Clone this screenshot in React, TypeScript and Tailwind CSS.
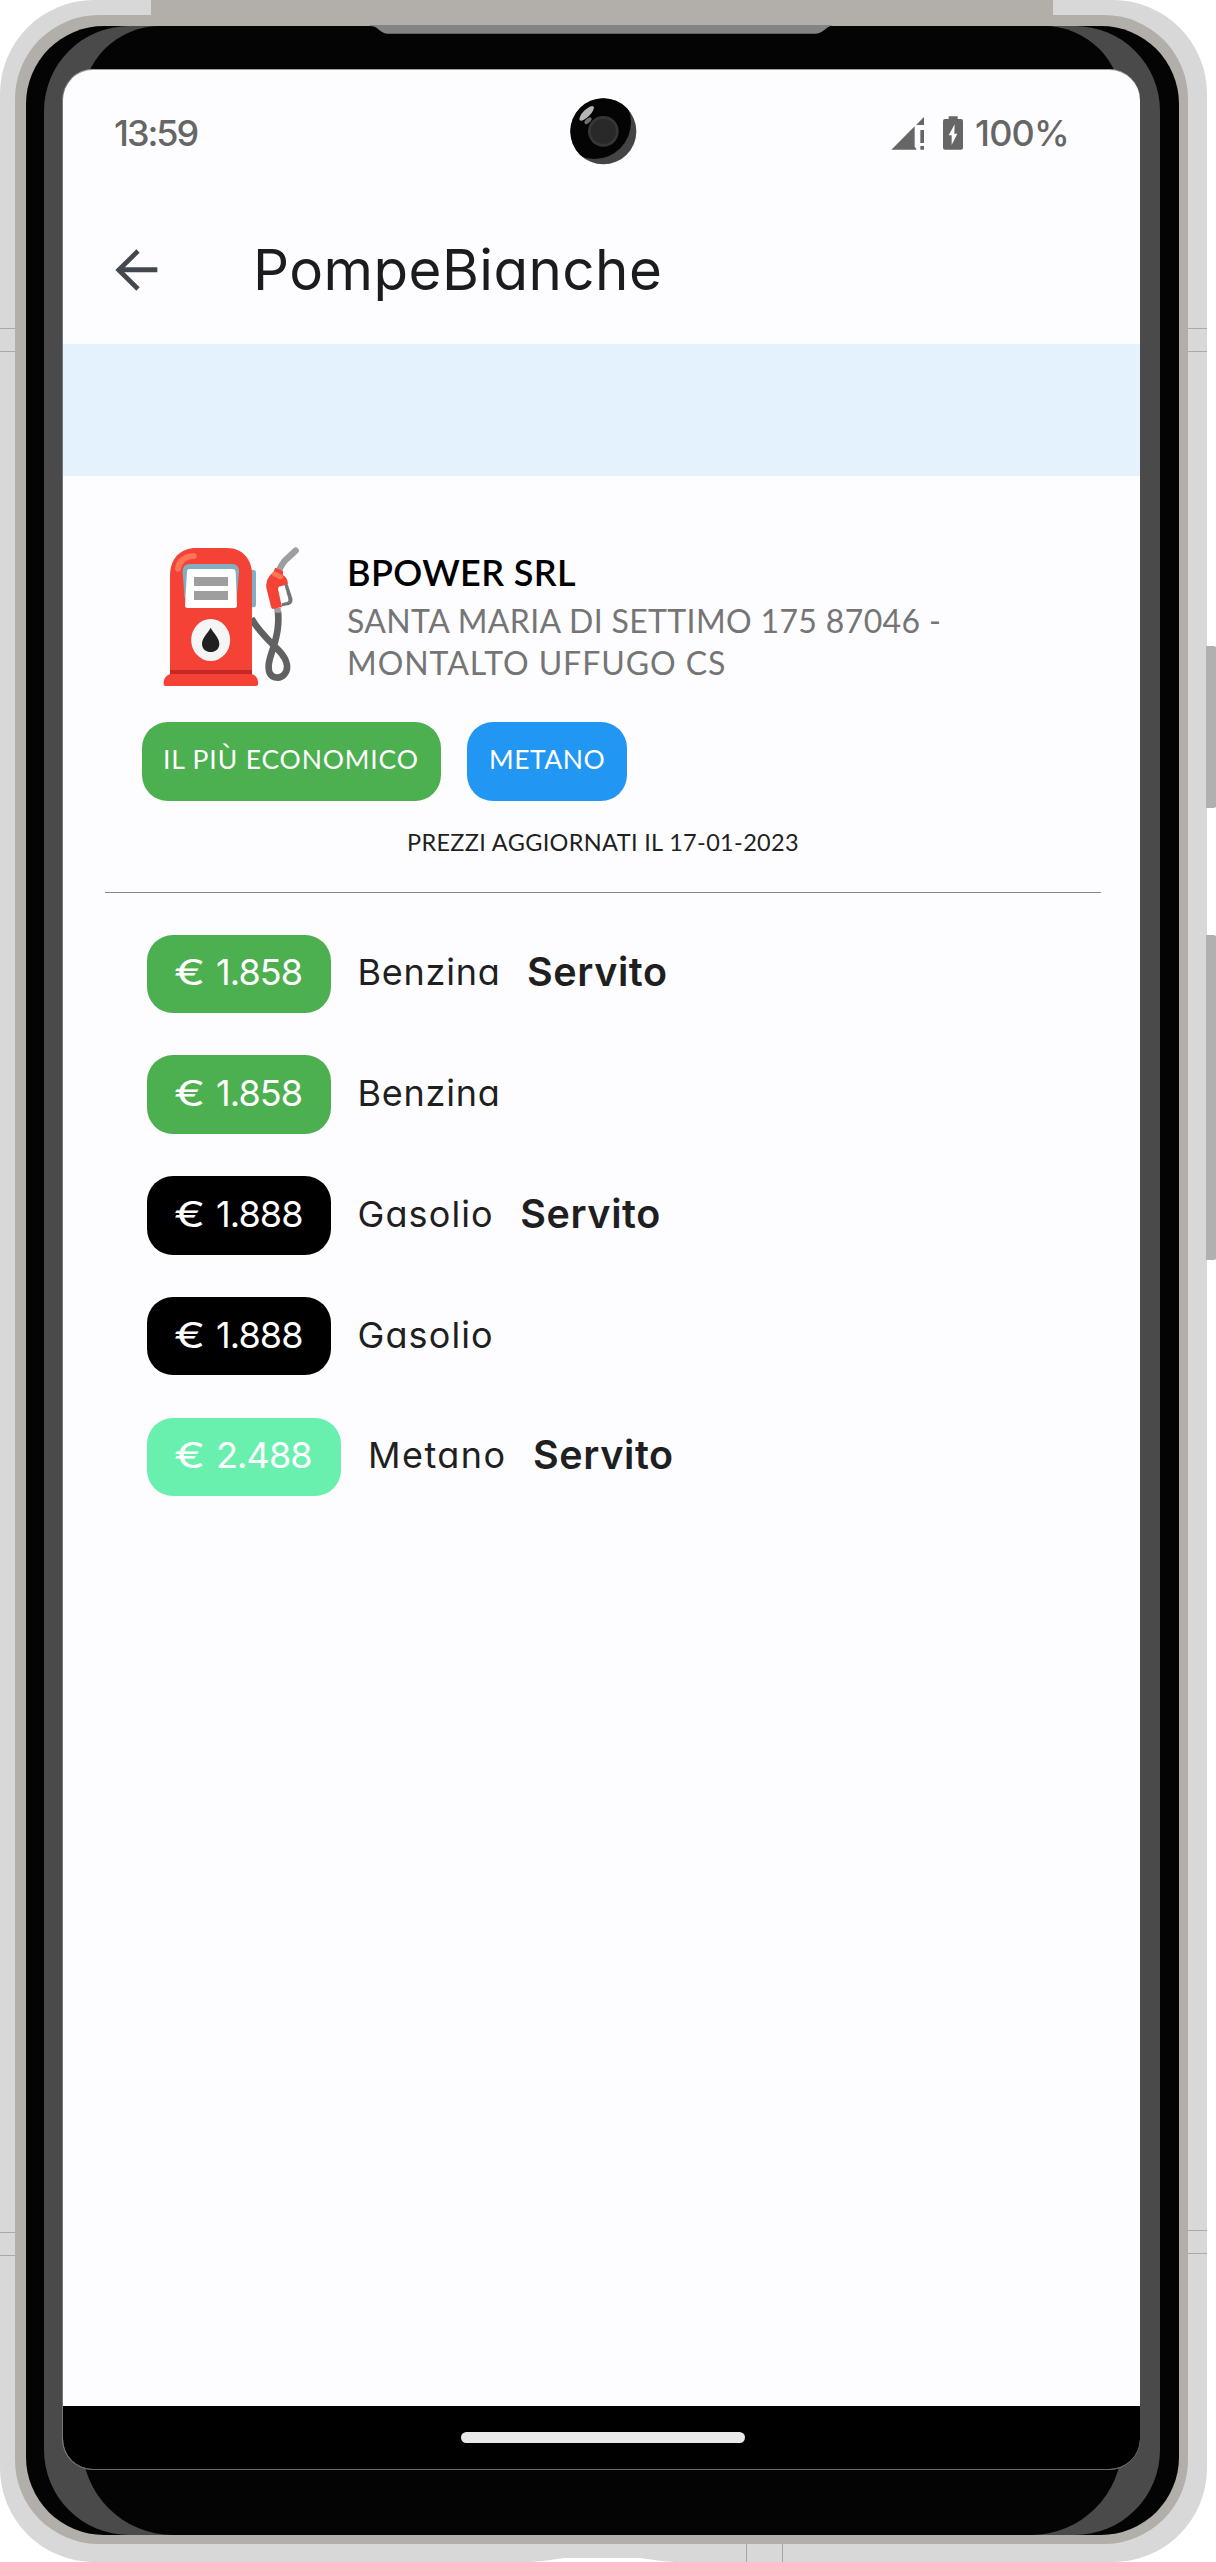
type FuelRow = {
  amount: string;
  fuel: string;
  served: boolean;
  pill: string;
  tracking: string;
};

const rows: FuelRow[] = [
  { amount: '1.858', fuel: 'Benzina', served: true, pill: 'w-[183.5px] bg-[#4caf50]', tracking: 'tracking-[0.75px]' },
  { amount: '1.858', fuel: 'Benzina', served: false, pill: 'w-[183.5px] bg-[#4caf50]', tracking: 'tracking-[0.75px]' },
  { amount: '1.888', fuel: 'Gasolio', served: true, pill: 'w-[183.5px] bg-black', tracking: 'tracking-[1.1px]' },
  { amount: '1.888', fuel: 'Gasolio', served: false, pill: 'w-[183.5px] bg-black', tracking: 'tracking-[1.1px]' },
  { amount: '2.488', fuel: 'Metano', served: true, pill: 'w-[194px] bg-[#69f0ae]', tracking: 'tracking-[1.45px]' },
];

function SignalIcon() {
  return (
    <svg className="h-[35px] w-[35px]" viewBox="0 0 105 105" fill="#666">
      <path d="M1 101 L71 31 V92 L76 98 V101 Z" />
      <path d="M76 26 L99 3 V27 H76 Z" />
      <path d="M88 42h11v39H88zM88 90h11v11H88z" />
    </svg>
  );
}

function BatteryIcon() {
  return (
    <svg className="h-[34px] w-[20px]" viewBox="0 0 60 102">
      <path
        d="M17 1h27v8h10q6 0 6 6v80q0 6-6 6H6q-6 0-6-6V15q0-6 6-6h11z"
        fill="#666"
      />
      <path d="M35 25 17 58h9v29l17-34h-9z" fill="#fff" />
    </svg>
  );
}

function BackIcon() {
  return (
    <svg className="h-[42px] w-[43px]" viewBox="0 0 129 126" fill="none" stroke="#43474e">
      <path d="M127 62H14" strokeWidth="15" />
      <path d="M69 6 11 63l58 57" strokeWidth="14" />
    </svg>
  );
}

function Camera() {
  return (
    <svg className="absolute left-[507px] top-[28px] h-[67px] w-[67px]" viewBox="0 0 201 201">
      <defs>
        <clipPath id="lens">
          <circle cx="100" cy="100" r="99" />
        </clipPath>
      </defs>
      <circle cx="100" cy="100" r="99" fill="#444" />
      <circle cx="73" cy="73" r="110" fill="#040404" clipPath="url(#lens)" />
      <circle cx="100" cy="100" r="46" fill="#373737" />
      <circle cx="100" cy="100" r="38" fill="#292929" />
      <ellipse cx="50" cy="46" rx="29" ry="10.5" fill="#b5b5b5" transform="rotate(-45 50 46)" />
      <ellipse cx="54" cy="68" rx="13" ry="6.5" fill="#707070" transform="rotate(-43 54 68)" />
    </svg>
  );
}

function FuelPump() {
  return (
    <svg className="h-[160px] w-[160px] shrink-0" viewBox="0 0 480 480">
      {/* hose */}
      <path
        d="M304 250C328 292 362 322 386 346C412 374 418 400 403 418C390 433 367 430 359 414C350 392 362 362 372 332C380 302 388 272 384 230"
        fill="none"
        stroke="#616161"
        strokeWidth="20"
      />
      <rect x="296" y="105" width="22" height="112" rx="7" fill="#82aec0" />
      {/* cabinet */}
      <path d="M60 425V122C60 70 92 39 138 39H232C276 39 306 72 306 118V425Z" fill="#f44336" />
      <path d="M60 405h246v12H60z" fill="#c62828" />
      <path d="M60 417H306Q324 424 324 442V448Q324 453 318 453H47Q41 453 41 448V442Q42 424 60 417Z" fill="#f44336" />
      <path d="M84 101C86 80 103 64 131 63" fill="none" stroke="#ff7555" strokeWidth="18" strokeLinecap="round" />
      {/* display */}
      <path d="M104 190 98 112Q97 87 120 87H246Q268 87 267 112L260 190Z" fill="#82aec0" />
      <path d="M118 102H249Q256 102 257 110L261 211Q261 219 253 219H112Q105 219 105 211L111 110Q111 102 118 102Z" fill="#fff" />
      <path d="M132 126h102v27H132zM132 168h102v27H132z" fill="#9e9e9e" />
      <ellipse cx="182" cy="315" rx="58.5" ry="63" fill="#f5f5f5" />
      <path d="M182 278C190 294 208 308 208 326C208 342 196 351 182 351C168 351 156 342 156 326C156 308 174 294 182 278Z" fill="#212121" />
      {/* nozzle */}
      <path d="M384 112C396 88 399 79 412 70L437 47" fill="none" stroke="#9e9e9e" strokeWidth="19" strokeLinecap="round" strokeLinejoin="round" />
      <path d="M372 219h20l1 14h-19z" fill="#9e9e9e" />
      <path
        d="M376 98 399 108V120Q414 130 414 148L386 155 384 163 396 216 368 222Q364 220 363 215L349 158Q347 138 359 122L370 111Z"
        fill="#f44336"
      />
      <path d="M374 117 392 126" stroke="#ff7555" strokeWidth="15" strokeLinecap="round" />
      <path d="M386 160 407 151 415 192Q416 200 408 202L394 206Z" fill="#fff" />
      <path d="M403 148 413 148 427 190Q430 206 417 210L396 214 395 205 411 201Q417 199 415 191Z" fill="#757575" />
    </svg>
  );
}

function Screen() {
  return (
    <div className="relative flex h-[2401px] w-[1078px] flex-col overflow-hidden rounded-[31px] border-y border-l border-t-[#a0a0a0] border-b-[#6a6a6a] border-l-[#777] bg-[#fdfdff]">
      <Camera />
      <div className="flex h-[126px] shrink-0 items-center justify-between pl-[51px] pr-[71px] text-[36px] font-medium leading-none text-[#666]">
        <span className="tracking-[-2.05px]">13:59</span>
        <div className="flex items-center">
          <SignalIcon />
          <div className="ml-[17px] flex items-center">
            <BatteryIcon />
          </div>
          <span className="ml-[12px] tracking-[-0.8px]">100%</span>
        </div>
      </div>

      <header className="flex h-[148px] shrink-0 items-center pl-[52px]">
        <BackIcon />
        <h1 className="ml-[95px] text-[56.5px] leading-none tracking-[0.45px] text-[#1a1c1e]">
          PompeBianche
        </h1>
      </header>

      <div className="h-[132px] shrink-0 bg-[#e3f2fd]" />

      <main className="flex grow flex-col pt-[59px]">
        <section className="flex pl-[87px]">
          <FuelPump />
          <div className="ml-[37px] mt-[16px] font-['Lato',sans-serif]">
            <h2 className="text-[36px] font-semibold leading-[42px] tracking-[0.38px] text-black">
              BPOWER SRL
            </h2>
            <p className="mt-[7px] whitespace-nowrap text-[32px] leading-[42px] text-[#757575]">
              <span className="tracking-[0.36px]">SANTA MARIA DI SETTIMO 175 87046 -</span>
              <br />
              <span className="tracking-[0.94px]">MONTALTO UFFUGO CS</span>
            </p>
          </div>
        </section>

        <div className="mt-[27px] flex gap-[26px] pl-[79px] font-['Lato',sans-serif] text-[26.5px] leading-none text-white">
          <span className="flex h-[78.5px] w-[299px] items-center rounded-[26px] bg-[#4caf50] pb-[4px] pl-[21px] tracking-[0.86px]">
            IL PIÙ ECONOMICO
          </span>
          <span className="flex h-[78.5px] w-[160px] items-center rounded-[26px] bg-[#2196f3] pb-[4px] pl-[22px] tracking-[0.52px]">
            METANO
          </span>
        </div>

        <p className="mt-[25.5px] pl-[3px] text-center font-['Lato',sans-serif] text-[23.5px] leading-[32px] tracking-[0.34px] text-[#1f1f21]">
          PREZZI AGGIORNATI IL 17-01-2023
        </p>
        <div className="ml-[42px] mr-[39px] mt-[33.5px] h-px shrink-0 bg-[#84878c]" />

        <ul className="mt-[42px] flex flex-col gap-[42.3px] pl-[84px]">
          {rows.map((row, i) => (
            <li key={i} className="flex h-[78.5px] items-center whitespace-nowrap text-[36px] leading-none text-[#1f1f21]">
              <span className={`flex h-full items-center rounded-[26px] pb-[3px] pl-[27px] text-white ${row.pill}`}>
                <span className="w-[42px] origin-left scale-x-[1.3]">€ </span>
                <span className="tracking-[-0.9px]">{row.amount}</span>
              </span>
              <span className={`ml-[27px] pb-[3px] ${row.tracking}`}>{row.fuel}</span>
              {row.served && (
                <span className="ml-[26.5px] pb-[2px] text-[39.5px] font-semibold tracking-[0.6px]">
                  Servito
                </span>
              )}
            </li>
          ))}
        </ul>
      </main>

      <nav className="flex h-[63px] shrink-0 items-center justify-center bg-black pl-[2px]">
        <div className="h-[11px] w-[284px] rounded-full bg-[#eaeaea]" />
      </nav>
    </div>
  );
}

/* Seams, buttons and port cut-out that sit on top of the device body. */
function BodyDetails() {
  return (
    <>
      <div className="absolute left-[151px] top-0 h-[26px] w-[902px] bg-[#b2afaa]" />
      <svg className="absolute left-[370px] top-[25px] h-[9px] w-[464px]" viewBox="0 0 464 9">
        <path d="M0 1Q5 1 8 4Q13 8.7 18 8.7H445Q450 8.7 455 4.500Q460 0 464 0H0Z" fill="#848484" />
      </svg>
      <div className="absolute left-0 top-[328px] h-[24px] w-[16px] border-y border-[#aaa]" />
      <div className="absolute left-[1187px] top-[328px] h-[24px] w-[20px] border-y border-[#aaa]" />
      <div className="absolute left-0 top-[2232px] h-[24px] w-[16px] border-y border-[#aaa]" />
      <div className="absolute left-[1187px] top-[2230px] h-[24px] w-[20px] border-y border-[#aaa]" />
      <div className="absolute left-[746px] top-[2543px] h-[19px] w-[37px] border-x border-[#a5a5a5]" />
      <svg className="absolute left-[530px] top-[2557px] h-[5px] w-[146px]" viewBox="0 0 146 5">
        <path d="M0 5Q16 4 34 1H110Q128 4 146 5Z" fill="#fff" />
      </svg>
      <div className="absolute left-[1206px] top-[646px] h-[162px] w-[11px] rounded-r-[4px] bg-[#b0b0b0]" />
      <div className="absolute left-[1206px] top-[935px] h-[325px] w-[11px] rounded-r-[4px] bg-[#b0b0b0]" />
    </>
  );
}

export default function App() {
  return (
    <div className="relative h-[2562px] w-[1216px] overflow-hidden bg-white font-['Inter',sans-serif] [font-feature-settings:'cv11']">
      <div className="h-[2562px] w-[1206.500px] rounded-[94px] bg-[#d8d8d8] pl-[15px] pt-[15px]">
        <div className="h-[2529px] w-[1173px] rounded-[84px] bg-[#b2afaa] pl-[10.5px] pt-[11px]">
          <div className="h-[2508.500px] w-[1153px] rounded-[78px] bg-[#040404] pl-[18.5px]">
            <div className="h-[2508.500px] w-[1115.500px] rounded-[85px] bg-[#4a4a4a] pl-[38px]">
              <div className="h-[2508.500px] w-[1040px] rounded-t-[78px] rounded-b-[91px] bg-[#040404] pt-[43px]">
                <div className="-ml-[20px] w-[1078px]">
                  <Screen />
                </div>
              </div>
            </div>
          </div>
        </div>
      </div>
      <BodyDetails />
    </div>
  );
}
